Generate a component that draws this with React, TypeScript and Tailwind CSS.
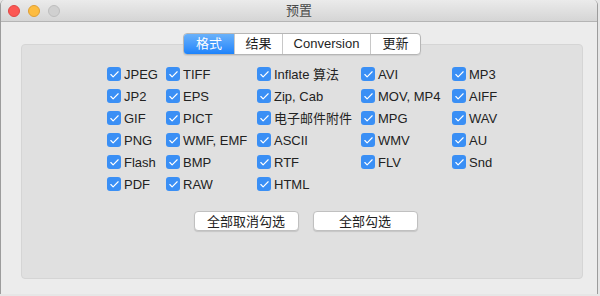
import { Check } from 'lucide-react';

const columns: string[][] = [
  ['JPEG', 'JP2', 'GIF', 'PNG', 'Flash', 'PDF'],
  ['TIFF', 'EPS', 'PICT', 'WMF, EMF', 'BMP', 'RAW'],
  ['Inflate 算法', 'Zip, Cab', '电子邮件附件', 'ASCII', 'RTF', 'HTML'],
  ['AVI', 'MOV, MP4', 'MPG', 'WMV', 'FLV'],
  ['MP3', 'AIFF', 'WAV', 'AU', 'Snd'],
];

const colWidths = ['w-[59px]', 'w-[91px]', 'w-[104px]', 'w-[91px]', 'w-[80px]'];

const tabs = [
  { label: '格式', w: 'w-[50px]', active: true },
  { label: '结果', w: 'w-[48px]', active: false },
  { label: 'Conversion', w: 'w-[88px]', active: false },
  { label: '更新', w: 'w-[50px]', active: false },
];

function CheckItem({ label }: { label: string }) {
  return (
    <div className="h-[22px] flex items-center gap-[3px]">
      <span className="w-[14px] h-[14px] rounded-[3px] bg-[#3a8ff5] flex items-center justify-center shrink-0">
        <Check size={11} strokeWidth={2.5} className="text-white" />
      </span>
      <span className="text-[13px] text-[#222] whitespace-nowrap leading-none">{label}</span>
    </div>
  );
}

export default function App() {
  return (
    <div className="w-[600px] h-[296px] bg-[#e6e6e6] font-['Liberation_Sans','Noto_Sans_CJK_SC',sans-serif]">
      <div className="w-[598px] h-[294px] flex flex-col bg-[#ececec] border-l border-r border-[#9c9c9c] rounded-t-[5px] overflow-hidden">
        {/* Title bar */}
        <div className="h-[22px] flex items-center bg-gradient-to-b from-[#ebebeb] to-[#d5d5d5] border-b border-[#b4b4b4] shrink-0">
          <div className="w-[62px] flex items-center gap-[8px] pl-[7px]">
            <span className="w-[12px] h-[12px] rounded-full bg-[#fc5753] border border-[#df4744]" />
            <span className="w-[12px] h-[12px] rounded-full bg-[#fdbc40] border border-[#de9f34]" />
            <span className="w-[12px] h-[12px] rounded-full bg-[#d0d0d0] border border-[#bdbdbd]" />
          </div>
          <div className="flex-1 text-center text-[13px] text-[#4a4a4a]">预置</div>
          <div className="w-[62px]" />
        </div>

        {/* Body */}
        <div className="flex-1 pl-[20px]">
          <div className="mt-[22px] w-[562px] h-[235px] bg-[#e0e0e0] border border-[#d5d5d5] rounded-[4px] flex flex-col items-center">
            {/* Tabs */}
            <div className="-mt-[12px] h-[22px] flex bg-white border border-[#b6b6b6] rounded-[4px] overflow-hidden shadow-[0_1px_1px_rgba(0,0,0,0.08)]">
              {tabs.map((t, i) => (
                <div
                  key={t.label}
                  className={`${t.w} h-full flex items-center justify-center text-[13px] ${
                    t.active
                      ? 'bg-gradient-to-b from-[#69b1fa] to-[#1b83fb] text-white'
                      : 'text-[#1e1e1e]'
                  } ${i > 0 ? 'border-l border-[#c8c8c8]' : ''}`}
                >
                  {t.label}
                </div>
              ))}
            </div>

            {/* Checkbox grid */}
            <div className="self-start pl-[85px] mt-[8px] flex">
              {columns.map((col, ci) => (
                <div key={ci} className={`${colWidths[ci]} flex flex-col`}>
                  {col.map((label) => (
                    <CheckItem key={label} label={label} />
                  ))}
                </div>
              ))}
            </div>

            {/* Buttons */}
            <div className="mt-[16px] flex gap-[14px] pl-[7px]">
              <button className="w-[105px] h-[20px] bg-white border border-[#c0c0c0] rounded-[4px] text-[13px] text-[#222] leading-none shadow-[0_1px_1px_rgba(0,0,0,0.12)]">
                全部取消勾选
              </button>
              <button className="w-[105px] h-[20px] bg-white border border-[#c0c0c0] rounded-[4px] text-[13px] text-[#222] leading-none shadow-[0_1px_1px_rgba(0,0,0,0.12)]">
                全部勾选
              </button>
            </div>
          </div>
        </div>
      </div>
    </div>
  );
}
